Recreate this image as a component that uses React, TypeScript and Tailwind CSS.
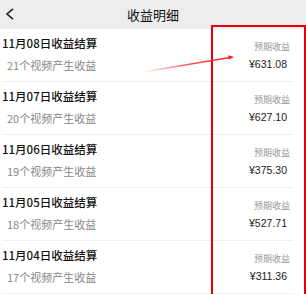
import React from "react";

const rows = [
  { date: "11月08日收益结算", sub: "21个视频产生收益", amt: "¥631.08" },
  { date: "11月07日收益结算", sub: "20个视频产生收益", amt: "¥627.10" },
  { date: "11月06日收益结算", sub: "19个视频产生收益", amt: "¥375.30" },
  { date: "11月05日收益结算", sub: "18个视频产生收益", amt: "¥527.71" },
  { date: "11月04日收益结算", sub: "17个视频产生收益", amt: "¥311.36" },
];

export default function App() {
  return (
    <div
      className="relative w-[306px] h-[294px] overflow-hidden bg-white"
      style={{ fontFamily: '"Noto Sans CJK SC", "Noto Sans", sans-serif' }}
    >
      <div className="relative h-[29px] bg-[#ededed] flex items-center justify-center">
        <svg className="absolute left-[5px] top-[8px]" width="10" height="12" viewBox="0 0 10 12">
          <path d="M8 0.8 L2 6 L8 11.2" fill="none" stroke="#222" strokeWidth="1.6" />
        </svg>
        <span className="text-[13px] text-[#111] leading-none">收益明细</span>
      </div>
      {rows.map((r) => (
        <div key={r.date} className="ml-[2px] mr-[13px] h-[53px] border-b border-[#efefef] flex justify-between">
          <div className="flex flex-col">
            <span className="mt-[6px] text-[11.5px] leading-[16px] text-[#111] font-medium">{r.date}</span>
            <span className="mt-[6px] ml-[5px] text-[11px] leading-[16px] text-[#888]">{r.sub}</span>
          </div>
          <div className="flex flex-col items-end">
            <span className="mt-[12px] mr-[3px] text-[9px] leading-[12px] text-[#999]">预期收益</span>
            <span
              className="mt-[5px] mr-[6px] text-[10.5px] leading-[12px] text-[#222]"
              style={{ fontFamily: '"Liberation Sans", "Noto Sans CJK SC", sans-serif' }}
            >
              {r.amt}
            </span>
          </div>
        </div>
      ))}
      <div className="absolute left-[211px] top-[25px] w-[95px] h-[300px] border-2 border-red-600" />
      <svg className="absolute left-0 top-0 pointer-events-none" width="306" height="294">
        <defs>
          <linearGradient id="g" x1="143" y1="72" x2="233" y2="57" gradientUnits="userSpaceOnUse">
            <stop offset="0" stopColor="#ff3030" stopOpacity="0" />
            <stop offset="0.5" stopColor="#ff3030" stopOpacity="0.8" />
            <stop offset="1" stopColor="#ff1a1a" stopOpacity="1" />
          </linearGradient>
        </defs>
        <line x1="143" y1="72" x2="230" y2="57.5" stroke="url(#g)" strokeWidth="1.4" />
        <path d="M234 57 L228 55.3 L229 59.6 Z" fill="#ff1a1a" />
      </svg>
    </div>
  );
}
